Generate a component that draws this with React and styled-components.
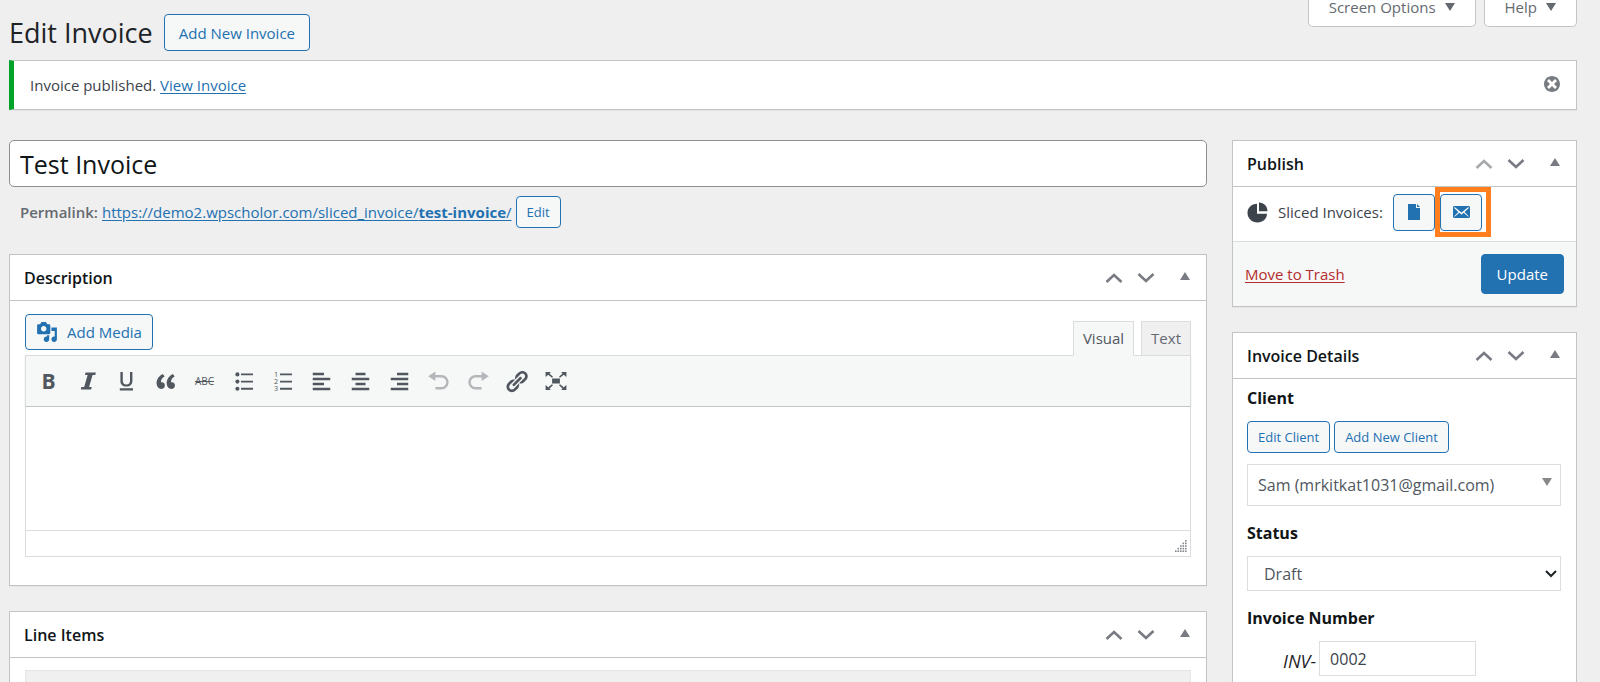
import { useState } from 'react';
import styled, { createGlobalStyle, css } from 'styled-components';

const DISMISS = 'M10 2c4.42 0 8 3.58 8 8s-3.58 8-8 8-8-3.58-8-8 3.58-8 8-8zm5 11l-3-3 3-3-2-2-3 3-3-3-2 2 3 3-3 3 2 2 3-3 3 3z'
const PIE = 'M11.2 9V2c3.87 0 6.8 3.13 6.8 7h-6.8zM9.6 3v8h8c0 3.87-3.3 7-7.6 7-4.4 0-8-3.4-8-7.6 0-4.2 3.3-7.4 7.6-7.4z'
const DOCUMENT = 'M12 2H4v16h12V6h-4V2zm1 0v3h3z'
const EMAIL = 'M19 14.5v-9c0-.83-.67-1.5-1.5-1.5H3.49c-.83 0-1.5.67-1.5 1.5v9c0 .83.67 1.5 1.5 1.5H17.5c.83 0 1.5-.67 1.5-1.5zm-1.31-9.11c.33.33.15.67-.03.84L13.6 9.95l3.9 4.06c.12.14.2.36.06.51-.13.16-.43.15-.56.05l-4.37-3.73-2.14 1.95-2.13-1.95-4.37 3.73c-.13.1-.43.11-.56-.05-.14-.15-.06-.37.06-.51l3.9-4.06-4.06-3.72c-.18-.17-.36-.51-.03-.84s.67-.17.95.07l6.24 5.04 6.25-5.04c.28-.24.62-.4.95-.07z'
const MEDIA = 'M13 11V4c0-.55-.45-1-1-1h-1.67L9 1H5L3.67 3H2c-.55 0-1 .45-1 1v7c0 .55.45 1 1 1h10c.55 0 1-.45 1-1zM7 4.5c1.38 0 2.5 1.12 2.5 2.5S8.38 9.5 7 9.5 4.5 8.38 4.5 7 5.62 4.5 7 4.5zM14 6h5v10.5c0 1.38-1.12 2.5-2.5 2.5S14 17.88 14 16.5s1.12-2.5 2.5-2.5c.17 0 .34.02.5.05V9h-3V6zm-4 8.05V13h2v3.5c0 1.38-1.12 2.5-2.5 2.5S7 17.88 7 16.5 8.12 14 9.5 14c.17 0 .34.02.5.05z'
const QUOTE = 'M9.49 13.22c0-.74-.2-1.38-.61-1.9-.62-.78-1.83-.88-2.53-.72-.29-1.65 1.11-3.75 2.92-4.65L7.88 4c-2.73 1.3-5.42 4.28-4.96 8.05C3.21 14.43 4.59 16 6.54 16c.85 0 1.56-.25 2.12-.75s.83-1.18.83-2.03zm8.05 0c0-.74-.2-1.38-.61-1.9-.63-.78-1.83-.88-2.53-.72-.29-1.65 1.11-3.75 2.92-4.65L15.93 4c-2.73 1.3-5.41 4.28-4.95 8.05.29 2.38 1.66 3.95 3.61 3.95.85 0 1.56-.25 2.12-.75s.83-1.18.83-2.03z'
const UNDO = 'M12 5H7V2L1 6l6 4V7h5c2.2 0 4 1.8 4 4s-1.8 4-4 4H7v2h5c3.3 0 6-2.7 6-6s-2.7-6-6-6z'
const REDO = 'M8 5h5V2l6 4-6 4V7H8c-2.2 0-4 1.8-4 4s1.8 4 4 4h5v2H8c-3.3 0-6-2.7-6-6s2.7-6 6-6z'
const LINK = 'M17.74 2.76c1.68 1.69 1.68 4.41 0 6.1l-1.53 1.52c-1.12 1.12-2.7 1.47-4.14 1.09l2.62-2.61.76-.77.76-.76c.84-.84.84-2.2 0-3.04-.84-.85-2.2-.85-3.04 0l-.77.76-3.38 3.38c-.37-1.44-.02-3.02 1.1-4.14l1.52-1.53c1.69-1.68 4.42-1.68 6.1 0zM8.59 13.43l5.34-5.34c.42-.42.42-1.1 0-1.52-.44-.43-1.13-.39-1.53 0l-5.33 5.34c-.42.42-.42 1.1 0 1.52.44.43 1.13.39 1.52 0zm-.76 2.29l4.14-4.15c.38 1.44.03 3.02-1.09 4.14l-1.52 1.53c-1.69 1.68-4.41 1.68-6.1 0-1.68-1.68-1.68-4.42 0-6.1l1.53-1.52c1.12-1.12 2.7-1.47 4.14-1.1l-4.14 4.15c-.85.84-.85 2.2 0 3.05.84.84 2.2.84 3.04 0z'
const ALIGN_LEFT = 'M12 5V3H3v2h9zm5 4V7H3v2h14zm-5 4v-2H3v2h9zm5 4v-2H3v2h14z'
const ALIGN_CENTER = 'M14 5V3H6v2h8zm3 4V7H3v2h14zm-3 4v-2H6v2h8zm3 4v-2H3v2h14z'
const ALIGN_RIGHT = 'M17 5V3H8v2h9zm0 4V7H3v2h14zm0 4v-2H8v2h9zm0 4v-2H3v2h14z'
const EXPAND = 'M7 8h6v4H7zM2 3h4L5 4.300l2.700 2.400-.8.800L4 5.200 2 7zM18 3v4l-2-1.800-2.900 2.300-.8-.8L15 4.300 14 3zM2 17v-4l2 1.800 2.900-2.300.8.8L5 15.700 6 17zM18 17h-4l1-1.300-2.700-2.400.8-.8 2.900 2.300 2-1.800z'

function Icon({ d, size = 20, children }) {
    return (
        <svg width={size} height={size} viewBox="0 0 20 20" fill="currentColor" aria-hidden="true">
            {d ? <path d={d} /> : children}
        </svg>
    );
}

function Chevron({ down }) {
    return (
        <svg width="18" height="12" viewBox="0 0 18 12" fill="none" stroke="currentColor" strokeWidth="2.6" aria-hidden="true">
            <path d={down ? 'M1.5 2l7.5 7 7.5-7' : 'M1.5 10L9 3l7.5 7'} />
        </svg>
    );
}

function Triangle({ down, size = 10 }) {
    return (
        <svg width={size} height="8" viewBox="0 0 10 8" preserveAspectRatio="none" fill="currentColor" aria-hidden="true">
            <path d={down ? 'M0 0h10L5 8z' : 'M5 0l5 8H0z'} />
        </svg>
    );
}

const tools = [
    { name: 'Bold', icon: <BoldMark>B</BoldMark> },
    { name: 'Italic', icon: <Icon size={24}><path d="M8 3h8.500l-.4 2h-2.300l-2.900 10h2.200l-.5 2H4l.5-2h2.300l2.900-10H7.500z" /></Icon> },
    { name: 'Underline', icon: <Icon size={24}><path d="M4 16h11v2H4zM4.500 2.500h2v7.300c0 2 .9 3.200 3 3.200s3-1.200 3-3.200V2.500h2V10c0 3-1.900 4.600-5 4.600s-5-1.600-5-4.600z" /></Icon> },
    { name: 'Blockquote', icon: <Icon size={25} d={QUOTE} /> },
    { name: 'Strikethrough', icon: <StrikeMark>ABC</StrikeMark> },
    {
        name: 'Bulleted list',
        icon: (
            <Icon size={24}>
                <circle cx="4.5" cy="4.5" r="1.7" />
                <circle cx="4.5" cy="10.5" r="1.7" />
                <circle cx="4.5" cy="16.5" r="1.7" />
                <path d="M7.5 3.7h10v1.5h-10zM7.5 9.7h10v1.5h-10zM7.5 15.7h10v1.5h-10z" />
            </Icon>
        ),
    },
    {
        name: 'Numbered list',
        icon: (
            <Icon size={24}>
                <text x="2.5" y="6.5" fontSize="6">1</text>
                <text x="2.5" y="12.5" fontSize="6">2</text>
                <text x="2.5" y="18.5" fontSize="6">3</text>
                <path d="M7.5 3.7h10v1.5h-10zM7.5 9.7h10v1.5h-10zM7.5 15.7h10v1.5h-10z" />
            </Icon>
        ),
    },
    { name: 'Align left', icon: <Icon size={25} d={ALIGN_LEFT} /> },
    { name: 'Align center', icon: <Icon size={25} d={ALIGN_CENTER} /> },
    { name: 'Align right', icon: <Icon size={25} d={ALIGN_RIGHT} /> },
    { name: 'Undo', icon: <Icon size={24} d={UNDO} />, disabled: true },
    { name: 'Redo', icon: <Icon size={24} d={REDO} />, disabled: true },
    { name: 'Insert link', icon: <Icon size={25} d={LINK} /> },
    { name: 'Fullscreen', icon: <Icon size={26} d={EXPAND} /> },
]

function BoldMark({ children }) {
    return <Bold>{children}</Bold>;
}

function StrikeMark({ children }) {
    return <Strike>{children}</Strike>;
}

function Postbox({ title, first, children }) {
    const [open, setOpen] = useState(true)

    return (
        <Box>
            <BoxHeader>
                <h2>{title}</h2>
                <BoxActions>
                    <HandleButton type="button" aria-label={`Move ${title} up`} disabled={first}><Chevron /></HandleButton>
                    <HandleButton type="button" aria-label={`Move ${title} down`}><Chevron down /></HandleButton>
                    <HandleButton type="button" $wide aria-label={`Toggle ${title}`} onClick={() => setOpen(!open)}>
                        <Triangle down={!open} />
                    </HandleButton>
                </BoxActions>
            </BoxHeader>
            {open && children}
        </Box>
    );
}

function Editor() {
    const [mode, setMode] = useState('Visual')
    const [content, setContent] = useState('')

    return (
        <EditorWrap>
            <EditorTop>
                <Button type="button" $size="media"><Icon size={22} d={MEDIA} />Add Media</Button>
                <Tabs>
                    {['Visual', 'Text'].map((name) => (
                        <Tab key={name} type="button" $active={mode === name} onClick={() => setMode(name)}>{name}</Tab>
                    ))}
                </Tabs>
            </EditorTop>
            <Toolbar>
                {tools.map((tool) => (
                    <ToolButton key={tool.name} type="button" aria-label={tool.name} disabled={tool.disabled}>
                        {tool.icon}
                    </ToolButton>
                ))}
            </Toolbar>
            <EditorArea aria-label="Description" value={content} onChange={(e) => setContent(e.target.value)} />
            <StatusBar>
                <svg width="13" height="13" viewBox="0 0 13 13" fill="#82878c" aria-hidden="true">
                    {[0, 1, 2, 3, 4].map((row) => Array.from({ length: row + 1 }, (_, i) => (
                        <rect key={`${row}-${i}`} x={11 - i * 2.5} y={row * 2.6} width="1.6" height="1.6" />
                    )))}
                </svg>
            </StatusBar>
        </EditorWrap>
    );
}

function App() {
    const [title, setTitle] = useState('Test Invoice')
    const [number, setNumber] = useState('0002')
    const [status, setStatus] = useState('Draft')
    const [notice, setNotice] = useState(true)

    return (
        <Page>
            <GlobalStyle />
            <Header>
                <Heading>
                    <h1>Edit Invoice</h1>
                    <Button type="button" $size="page">Add New Invoice</Button>
                </Heading>
                <ScreenMeta>
                    <MetaButton type="button">Screen Options <Triangle down /></MetaButton>
                    <MetaButton type="button">Help <Triangle down /></MetaButton>
                </ScreenMeta>
            </Header>

            {notice && (
                <Notice>
                    <p>Invoice published. <a href="#view">View Invoice</a></p>
                    <DismissButton type="button" aria-label="Dismiss this notice" onClick={() => setNotice(false)}>
                        <Icon d={DISMISS} />
                    </DismissButton>
                </Notice>
            )}

            <Columns>
                <Main>
                    <TitleInput aria-label="Title" value={title} onChange={(e) => setTitle(e.target.value)} />
                    <Permalink>
                        <strong>Permalink:</strong>
                        <a href="#permalink">https://demo2.wpscholor.com/sliced_invoice/<b>test-invoice</b>/</a>
                        <Button type="button" $size="small">Edit</Button>
                    </Permalink>
                    <Stack>
                        <Postbox title="Description"><Editor /></Postbox>
                        <Postbox title="Line Items"><Items /></Postbox>
                    </Stack>
                </Main>

                <Stack as="aside">
                    <Postbox title="Publish" first>
                        <PublishRow>
                            <Icon size={25} d={PIE} />
                            <span>Sliced Invoices:</span>
                            <Button type="button" $size="icon" aria-label="View invoice"><Icon d={DOCUMENT} /></Button>
                            <Highlight>
                                <Button type="button" $size="icon" aria-label="Email invoice"><Icon d={EMAIL} /></Button>
                            </Highlight>
                        </PublishRow>
                        <PublishFooter>
                            <a href="#trash">Move to Trash</a>
                            <UpdateButton type="button">Update</UpdateButton>
                        </PublishFooter>
                    </Postbox>

                    <Postbox title="Invoice Details">
                        <Details>
                            <Label htmlFor="client">Client</Label>
                            <ClientButtons>
                                <Button type="button" $size="small">Edit Client</Button>
                                <Button type="button" $size="small">Add New Client</Button>
                            </ClientButtons>
                            <SelectWrap $tall>
                                <select id="client" defaultValue="sam">
                                    <option value="sam">Sam (mrkitkat1031@gmail.com)</option>
                                </select>
                                <Triangle down />
                            </SelectWrap>
                            <Label htmlFor="status">Status</Label>
                            <SelectWrap>
                                <select id="status" value={status} onChange={(e) => setStatus(e.target.value)}>
                                    <option>Draft</option>
                                    <option>Paid</option>
                                    <option>Unpaid</option>
                                </select>
                                <svg width="12" height="8" viewBox="0 0 12 8" fill="none" stroke="#1d2327" strokeWidth="2" aria-hidden="true">
                                    <path d="M1 1l5 5 5-5" />
                                </svg>
                            </SelectWrap>
                            <Label htmlFor="number">Invoice Number</Label>
                            <NumberRow>
                                <em>INV-</em>
                                <input id="number" value={number} onChange={(e) => setNumber(e.target.value)} />
                            </NumberRow>
                        </Details>
                    </Postbox>
                </Stack>
            </Columns>
        </Page>
    );
}

const GlobalStyle = createGlobalStyle`
    html {
        scrollbar-width: none;
    }

    *, *::before, *::after {
        box-sizing: border-box;
    }

    body {
        margin: 0;
        background: #efefef;
        color: #3c434a;
        font-family: "Open Sans", "Noto Sans", sans-serif;
        font-size: 15px;
        line-height: 22px;
    }

    h1, h2, p {
        margin: 0;
    }

    button, input, select, textarea {
        font-family: inherit;
    }

    button {
        cursor: pointer;
    }

    a {
        color: #2271b1;
        text-underline-offset: 2px;
    }

    svg {
        flex-shrink: 0;
    }
`

const Page = styled.div`
    padding: 0 23px 0 9px;
`

const Header = styled.header`
    display: flex;
    justify-content: space-between;
    align-items: flex-start;
    height: 60px;
`

const Heading = styled.div`
    display: flex;
    align-items: center;
    gap: 11px;
    padding-top: 14px;

    h1 {
        font-size: 27px;
        font-weight: 400;
        line-height: 36px;
        color: #1d2327;
    }
`

const ScreenMeta = styled.div`
    display: flex;
    gap: 8px;
`

const MetaButton = styled.button`
    display: flex;
    align-items: center;
    gap: 9px;
    height: 27px;
    padding: 0 20px 12px;
    border: 1px solid #c3c4c7;
    border-top: 0;
    border-radius: 0 0 5px 5px;
    background: #fff;
    color: #646970;
    font-size: 15px;
    line-height: 14px;
`

const sizes = {
    page: css`
        height: 37px;
        padding: 0 14px;
        font-size: 15px;
    `,
    media: css`
        height: 36px;
        padding: 0 10px;
        gap: 9px;
        font-size: 15px;
    `,
    small: css`
        height: 32px;
        padding: 0 10px;
        font-size: 13px;
    `,
    icon: css`
        width: 42px;
        height: 37px;
    `,
}

const Button = styled.button`
    display: inline-flex;
    align-items: center;
    justify-content: center;
    border: 1px solid #2271b1;
    border-radius: 4px;
    background: #f6f7f7;
    color: #2271b1;
    white-space: nowrap;
    ${({ $size }) => sizes[$size]}
`

const Notice = styled.div`
    display: flex;
    align-items: center;
    justify-content: space-between;
    height: 50px;
    margin-bottom: 30px;
    padding: 0 14px 0 16px;
    border: 1px solid #c3c4c7;
    border-left: 5px solid #00a32a;
    background: #fff;
    box-shadow: 0 1px 1px rgba(0, 0, 0, .04);
`

const DismissButton = styled.button`
    display: flex;
    padding: 0 0 2px;
    border: 0;
    background: none;
    color: #787c82;
`

const Columns = styled.div`
    display: grid;
    grid-template-columns: minmax(0, 1fr) 345px;
    gap: 25px;
`

const Main = styled.main`
    min-width: 0;
`

const Stack = styled.div`
    display: flex;
    flex-direction: column;
    gap: 25px;
`

const TitleInput = styled.input`
    display: block;
    width: 100%;
    height: 47px;
    padding: 0 10px;
    border: 1px solid #8c8f94;
    border-radius: 5px;
    background: #fff;
    color: #101517;
    font-size: 25px;
`

const Permalink = styled.div`
    display: flex;
    align-items: center;
    gap: 4px;
    height: 67px;
    padding: 0 11px 18px;
    color: #646970;

    strong {
        font-weight: 600;
    }
`

const Box = styled.section`
    border: 1px solid #c3c4c7;
    background: #fff;
    box-shadow: 0 1px 1px rgba(0, 0, 0, .04);
`

const BoxHeader = styled.div`
    display: flex;
    align-items: center;
    justify-content: space-between;
    height: 46px;
    padding: 0 4px 0 14px;
    border-bottom: 1px solid #c3c4c7;

    h2 {
        font-size: 16px;
        font-weight: 600;
        color: #101517;
    }
`

const BoxActions = styled.div`
    display: flex;
`

const HandleButton = styled.button`
    display: flex;
    align-items: center;
    justify-content: ${({ $wide }) => ($wide ? 'flex-end' : 'center')};
    width: ${({ $wide }) => ($wide ? '40px' : '32px')};
    height: 40px;
    padding: ${({ $wide }) => ($wide ? '0 12px 4px 0' : '0')};
    border: 0;
    background: none;
    color: #787c82;

    &:disabled {
        color: #a7aaad;
    }
`

const EditorWrap = styled.div`
    padding: 13px 15px 28px;
`

const EditorTop = styled.div`
    display: flex;
    align-items: flex-start;
    justify-content: space-between;
    height: 41px;
`

const Tabs = styled.div`
    display: flex;
    align-self: flex-end;
    gap: 7px;
`

const Tab = styled.button`
    position: relative;
    height: 35px;
    margin-bottom: -1px;
    padding: 0 9px 2px;
    border: 1px solid #dcdcde;
    border-bottom-color: ${({ $active }) => ($active ? '#f6f7f7' : '#dcdcde')};
    background: ${({ $active }) => ($active ? '#f6f7f7' : '#f0f0f1')};
    color: ${({ $active }) => ($active ? '#50575e' : '#646970')};
    font-size: 15px;
`

const Toolbar = styled.div`
    display: flex;
    align-items: center;
    height: 52px;
    padding: 0 3px;
    border: 1px solid #dcdcde;
    border-bottom-color: #c3c4c7;
    background: #f6f7f7;
    box-shadow: 0 1px 2px rgba(0, 0, 0, .1);
`

const ToolButton = styled.button`
    display: flex;
    align-items: center;
    justify-content: center;
    width: 39px;
    height: 36px;
    padding: 0;
    border: 0;
    background: none;
    color: #50575e;

    &:disabled {
        color: #b4b6b9;
    }
`

const Bold = styled.span`
    font-size: 21px;
    font-weight: 700;
`

const Strike = styled.span`
    font-size: 10px;
    text-decoration: line-through;
`

const EditorArea = styled.textarea`
    display: block;
    width: 100%;
    height: 123px;
    padding: 12px;
    border: 1px solid #dcdcde;
    border-width: 0 1px;
    outline: none;
    resize: none;
    font-size: 15px;
`

const StatusBar = styled.div`
    display: flex;
    align-items: flex-end;
    justify-content: flex-end;
    height: 27px;
    padding: 3px;
    border: 1px solid #dcdcde;
`

const Items = styled.div`
    height: 60px;
    margin: 12px 15px;
    border: 1px solid #e5e5e5;
    background: #f0f0f0;
`

const PublishRow = styled.div`
    display: flex;
    align-items: center;
    height: 54px;
    padding: 0 12px 4px;
    color: #3c434a;

    span {
        margin: 0 10px 0 8px;
    }
`

const Highlight = styled.div`
    display: flex;
    align-items: center;
    height: 50px;
    padding-right: 4px;
    border: 5px solid #ff7f1f;
`

const PublishFooter = styled.div`
    display: flex;
    align-items: center;
    justify-content: space-between;
    height: 65px;
    padding: 0 12px;
    border-top: 1px solid #dcdcde;
    background: #f6f7f7;

    a {
        color: #b32d2e;
    }
`

const UpdateButton = styled.button`
    height: 40px;
    padding: 0 15px;
    border: 1px solid #2271b1;
    border-radius: 4px;
    background: #2271b1;
    color: #fff;
    font-size: 15px;
`

const Details = styled.div`
    padding: 8px 15px 20px 14px;
`

const Label = styled.label`
    display: block;
    font-size: 16px;
    font-weight: 700;
    color: #101517;
`

const ClientButtons = styled.div`
    display: flex;
    gap: 4px;
    margin: 12px 0 11px;
`

const SelectWrap = styled.div`
    position: relative;
    margin: ${({ $tall }) => ($tall ? '0 0 16px' : '12px 0 16px')};

    select {
        display: block;
        width: 100%;
        height: ${({ $tall }) => ($tall ? '42px' : '35px')};
        padding: ${({ $tall }) => ($tall ? '0 30px 0 10px' : '0 30px 0 16px')};
        appearance: none;
        border: 1px solid #ddd;
        border-radius: 0;
        background: #fff;
        color: #50575e;
        font-size: 16px;
    }

    svg {
        position: absolute;
        top: 14px;
        right: ${({ $tall }) => ($tall ? '9px' : '4px')};
        color: #888;
        pointer-events: none;
    }
`

const NumberRow = styled.div`
    display: flex;
    align-items: center;
    gap: 3px;
    margin: 12px 0 0 36px;

    em {
        padding-top: 4px;
        color: #1d2327;
        font-size: 18px;
    }

    input {
        width: 157px;
        height: 35px;
        padding: 0 10px;
        border: 1px solid #ddd;
        color: #3c434a;
        font-size: 16px;
    }
`

export default App;
